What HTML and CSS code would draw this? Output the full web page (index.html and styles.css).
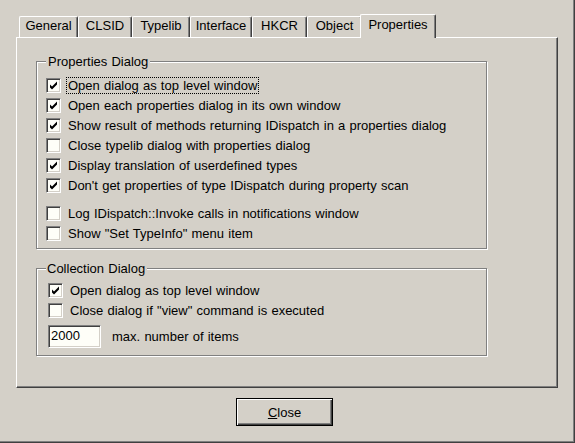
FILE: index.html
```html
<!DOCTYPE html>
<html>
<head>
<meta charset="utf-8">
<link rel="stylesheet" href="styles.css">
</head>
<body>
<div class="window">
  <div class="frame">
    <div class="tabs">
      <div class="tab t-general">General</div>
      <div class="tab t-clsid">CLSID</div>
      <div class="tab t-typelib">Typelib</div>
      <div class="tab t-interface">Interface</div>
      <div class="tab t-hkcr">HKCR</div>
      <div class="tab t-object">Object</div>
      <div class="tab tab-active t-properties">Properties</div>
    </div>
    <div class="panel">
      <fieldset class="group group-props">
        <legend>Properties Dialog</legend>
        <div class="row"><span class="cb"><svg viewBox="0 0 11 11" width="11" height="11"><polygon points="2,4.5 4,6.5 9,1.5 9,4.5 4,9.5 2,7.5"/></svg></span><span class="lbl focus">Open dialog as top level window</span></div>
        <div class="row"><span class="cb"><svg viewBox="0 0 11 11" width="11" height="11"><polygon points="2,4.5 4,6.5 9,1.5 9,4.5 4,9.5 2,7.5"/></svg></span><span class="lbl">Open each properties dialog in its own window</span></div>
        <div class="row"><span class="cb"><svg viewBox="0 0 11 11" width="11" height="11"><polygon points="2,4.5 4,6.5 9,1.5 9,4.5 4,9.5 2,7.5"/></svg></span><span class="lbl">Show result of methods returning IDispatch in a properties dialog</span></div>
        <div class="row"><span class="cb"></span><span class="lbl">Close typelib dialog with properties dialog</span></div>
        <div class="row"><span class="cb"><svg viewBox="0 0 11 11" width="11" height="11"><polygon points="2,4.5 4,6.5 9,1.5 9,4.5 4,9.5 2,7.5"/></svg></span><span class="lbl">Display translation of userdefined types</span></div>
        <div class="row"><span class="cb"><svg viewBox="0 0 11 11" width="11" height="11"><polygon points="2,4.5 4,6.5 9,1.5 9,4.5 4,9.5 2,7.5"/></svg></span><span class="lbl">Don't get properties of type IDispatch during property scan</span></div>
        <div class="row row-gap"><span class="cb"></span><span class="lbl">Log IDispatch::Invoke calls in notifications window</span></div>
        <div class="row"><span class="cb"></span><span class="lbl">Show "Set TypeInfo" menu item</span></div>
      </fieldset>
      <fieldset class="group group-coll">
        <legend>Collection Dialog</legend>
        <div class="row"><span class="cb"><svg viewBox="0 0 11 11" width="11" height="11"><polygon points="2,4.5 4,6.5 9,1.5 9,4.5 4,9.5 2,7.5"/></svg></span><span class="lbl">Open dialog as top level window</span></div>
        <div class="row"><span class="cb"></span><span class="lbl">Close dialog if "view" command is executed</span></div>
        <div class="edit-row"><div class="edit">2000</div><span class="edit-lbl">max. number of items</span></div>
      </fieldset>
    </div>
    <div class="buttons">
      <button class="btn" type="button"><u>C</u>lose</button>
    </div>
  </div>
</div>
</body>
</html>
```
FILE: styles.css
```css
html, body {
  margin: 0;
  padding: 0;
  background: #d4d0c8;
}
body {
  font-family: "Liberation Sans", Arial, sans-serif;
  font-size: 13px;
  line-height: 15px;
  word-spacing: 0.6px;
  color: #000;
}
.window {
  box-sizing: border-box;
  width: 575px;
  height: 443px;
  border-right: 1px solid #404040;
  border-bottom: 1px solid #404040;
  background: #d4d0c8;
}
.frame {
  box-sizing: border-box;
  height: 100%;
  border-right: 1px solid #808080;
  border-bottom: 1px solid #808080;
  padding: 14px 0 0 16px;
}
.tabs {
  display: flex;
  align-items: flex-end;
  height: 23px;
  margin-left: 3px;
}
.tab {
  box-sizing: border-box;
  height: 21px;
  padding-top: 1px;
  border-left: 1px solid #fff;
  border-top: 1px solid #fff;
  border-right: 1px solid #404040;
  border-radius: 2px 2px 0 0;
  box-shadow: inset -1px 0 0 #808080;
  text-align: center;
  white-space: nowrap;
  background: #d4d0c8;
}
.t-general { width: 59px; }
.t-clsid { width: 54px; }
.t-typelib { width: 58px; }
.t-interface { width: 62px; }
.t-hkcr { width: 55px; }
.t-object { width: 55px; }
.t-properties { width: 76px; }
.tab-active {
  position: relative;
  z-index: 1;
  height: 24px;
  margin-left: -2px;
  margin-bottom: -1px;
  padding-top: 2px;
}
.panel {
  box-sizing: border-box;
  width: 542px;
  height: 351px;
  border-top: 1px solid #fff;
  border-left: 1px solid #fff;
  border-right: 1px solid #404040;
  border-bottom: 1px solid #404040;
  box-shadow: inset -1px -1px 0 #808080;
  padding: 16px 0 0 19px;
}
.group {
  box-sizing: border-box;
  width: 451px;
  margin: 0;
  min-width: 0;
  border: 1px solid #808080;
  box-shadow: inset 1px 1px 0 #fff, 1px 1px 0 #fff;
}
.group legend {
  padding: 0 2px;
  background: #d4d0c8;
  line-height: 15px;
}
.group-props {
  padding: 6px 0 5px 9px;
}
.group-coll {
  margin-top: 12px;
  padding: 4px 0 7px 11px;
}
.group-coll legend {
  margin-left: -2px;
  padding: 0 2px 0 1px;
}
.row {
  display: flex;
  align-items: center;
  height: 20px;
}
.row-gap {
  margin-top: 8px;
}
.cb {
  box-sizing: border-box;
  width: 15px;
  height: 15px;
  flex: none;
  border-top: 1px solid #808080;
  border-left: 1px solid #808080;
  border-right: 1px solid #fff;
  border-bottom: 1px solid #fff;
  box-shadow: inset 1px 1px 0 #404040, inset -1px -1px 0 #d4d0c8;
  background: #fefef8;
  display: flex;
  align-items: center;
  justify-content: center;
}
.cb svg {
  display: block;
  fill: #000;
}
.lbl {
  margin-left: 5px;
  padding: 0 1px;
  border: 1px solid transparent;
  white-space: nowrap;
}
.lbl.focus {
  border: 1px dotted #000;
}
.edit-row {
  display: flex;
  align-items: center;
  margin-top: 5px;
}
.edit {
  box-sizing: border-box;
  width: 53px;
  height: 23px;
  padding: 2px 0 0 2px;
  border-top: 1px solid #808080;
  border-left: 1px solid #808080;
  border-right: 1px solid #fff;
  border-bottom: 1px solid #fff;
  box-shadow: inset 1px 1px 0 #404040, inset -1px -1px 0 #d4d0c8;
  background: #fefef8;
}
.edit-lbl {
  margin-left: 11px;
  white-space: nowrap;
}
.buttons {
  display: flex;
  margin-top: 10px;
  padding-left: 220px;
}
.btn {
  box-sizing: border-box;
  width: 97px;
  height: 28px;
  margin: 0;
  padding: 0;
  font: inherit;
  color: #000;
  background: #d4d0c8;
  border: 1px solid #000;
  border-radius: 0;
  box-shadow: inset 1px 1px 0 #fff, inset -1px -1px 0 #404040, inset -2px -2px 0 #808080;
  appearance: none;
  -webkit-appearance: none;
}
.btn u {
  text-decoration: underline;
}
```
